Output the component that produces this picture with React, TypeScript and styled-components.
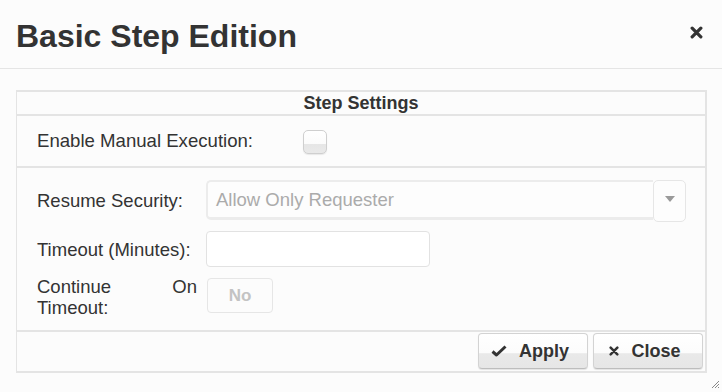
import React from 'react';
import styled, { createGlobalStyle } from 'styled-components';

const GlobalStyle = createGlobalStyle`
  html, body {
    margin: 0;
    padding: 0;
    background: #fcfcfc;
  }
  body {
    font-family: "Liberation Sans", Arial, Helvetica, sans-serif;
    color: #333;
  }
`;

const Dialog = styled.div`
  position: relative;
  width: 722px;
  height: 392px;
  background: #fcfcfc;
  overflow: hidden;
`;

const Header = styled.div`
  height: 68px;
  border-bottom: 1px solid #e5e5e5;
  display: flex;
  align-items: center;
  justify-content: space-between;
  padding: 0 19px 0 16px;
`;

const Title = styled.h1`
  margin: 0;
  padding-top: 4px;
  font-size: 32px;
  font-weight: bold;
  color: #333;
`;

const CloseIcon = styled.button`
  border: 0;
  background: none;
  padding: 0;
  margin-bottom: 4px;
  width: 13px;
  height: 13px;
  display: flex;
  cursor: pointer;
`;

const Body = styled.div`
  padding: 21px 15px 0 16px;
`;

const Panel = styled.div`
  border: 2px solid #e4e4e4;
  border-left-width: 1px;
  display: flex;
  flex-direction: column;
`;

const PanelTitle = styled.div`
  height: 22px;
  line-height: 22px;
  text-align: center;
  font-size: 18px;
  font-weight: bold;
  color: #333;
  border-bottom: 2px solid #e4e4e4;
`;

const Row = styled.div<{ $height: number }>`
  height: ${p => p.$height}px;
  border-bottom: 2px solid #e4e4e4;
  box-sizing: border-box;
  display: flex;
  align-items: center;
  padding-left: 20px;
`;

const RowLabel = styled.span`
  width: 266px;
  font-size: 18.6px;
  color: #333;
`;

const Checkbox = styled.span`
  width: 24px;
  height: 24px;
  box-sizing: border-box;
  border: 1px solid #cfcfcf;
  border-radius: 5px;
  background: linear-gradient(#ffffff 0%, #fbfbfb 58%, #e6e6e6 60%, #e9e9e9 100%);
  box-shadow: 0 1px 1px rgba(0, 0, 0, 0.08);
  margin-top: 1px;
`;

const FormArea = styled.div`
  height: 164px;
  border-bottom: 2px solid #e4e4e4;
  box-sizing: border-box;
  padding: 12px 0 0 20px;
  display: grid;
  grid-template-columns: 160px 1fr;
  column-gap: 9px;
  row-gap: 11px;
  align-content: start;
`;

const FieldLabel = styled.label<{ $justify?: boolean }>`
  font-size: 18.5px;
  line-height: 21px;
  color: #333;
  align-self: ${p => (p.$justify ? 'start' : 'center')};
  text-align: ${p => (p.$justify ? 'justify' : 'left')};
  margin-top: ${p => (p.$justify ? '-2px' : '0')};
`;

const Select = styled.div`
  display: flex;
  align-items: flex-start;
  width: 480px;
  height: 40px;
`;

const SelectField = styled.div`
  flex: 1;
  height: 40px;
  box-sizing: border-box;
  border: 2px solid #ececec;
  border-right: 0;
  border-bottom-width: 3px;
  border-radius: 5px 0 0 5px;
  background: #fdfdfd;
  display: flex;
  align-items: center;
  padding-left: 8px;
  font-size: 18.5px;
  color: #ababab;
`;

const SelectArrow = styled.div`
  flex: none;
  width: 33px;
  height: 42px;
  box-sizing: border-box;
  border: 1px solid #e6e6e6;
  border-radius: 5px;
  background: #fdfdfd;
  display: flex;
  justify-content: center;
  padding-top: 15px;
  &::after {
    content: '';
    width: 0;
    height: 0;
    border-left: 5px solid transparent;
    border-right: 5px solid transparent;
    border-top: 6px solid #9a9a9a;
  }
`;

const TextInput = styled.div`
  width: 224px;
  height: 36px;
  box-sizing: border-box;
  border: 1px solid #e2e2e2;
  border-radius: 4px;
  background: #fff;
`;

const ToggleButton = styled.div`
  width: 66px;
  height: 35px;
  box-sizing: border-box;
  margin-left: 1px;
  border: 1px solid #e6e6e6;
  border-radius: 4px;
  display: flex;
  align-items: center;
  justify-content: center;
  font-size: 17px;
  font-weight: bold;
  color: #c3c3c3;
`;

const Footer = styled.div`
  height: 38px;
  display: flex;
  justify-content: flex-end;
  align-items: flex-start;
  gap: 5px;
  padding: 1px 2px 0 0;
`;

const ActionButton = styled.button<{ $width: number }>`
  width: ${p => p.$width}px;
  height: 36px;
  box-sizing: border-box;
  border: 1px solid #d3d3d3;
  border-bottom-color: #bdbdbd;
  border-radius: 4px;
  background: linear-gradient(#ffffff 0%, #fcfcfc 55%, #e9e9e9 58%, #e6e6e6 100%);
  box-shadow: 0 1px 1px rgba(0, 0, 0, 0.1);
  display: flex;
  align-items: center;
  justify-content: center;
  gap: 12px;
  font-family: inherit;
  font-size: 18px;
  font-weight: bold;
  color: #333;
  padding: 0 6px 0 0;
  cursor: pointer;
`;

const Grip = styled.svg`
  position: absolute;
  right: 2px;
  bottom: 3px;
`;

const CheckMark = () => (
  <svg width="16" height="12" viewBox="0 0 16 12">
    <path d="M1.5 6.5 L5.5 10 L14.5 1.5" fill="none" stroke="#333" strokeWidth="3" strokeLinejoin="round" />
  </svg>
);

const Times = ({ size }: { size: number }) => (
  <svg width={size} height={size} viewBox="0 0 12 12">
    <path d="M2 2 L10 10 M10 2 L2 10" stroke="#333" strokeWidth="3" strokeLinecap="round" />
  </svg>
);

const App: React.FC = () => (
  <>
    <GlobalStyle />
    <Dialog>
      <Header>
        <Title>Basic Step Edition</Title>
        <CloseIcon aria-label="close">
          <Times size={13} />
        </CloseIcon>
      </Header>
      <Body>
        <Panel>
          <PanelTitle>Step Settings</PanelTitle>
          <Row $height={52}>
            <RowLabel>Enable Manual Execution:</RowLabel>
            <Checkbox />
          </Row>
          <FormArea>
            <FieldLabel>Resume Security:</FieldLabel>
            <Select>
              <SelectField>Allow Only Requester</SelectField>
              <SelectArrow />
            </Select>
            <FieldLabel>Timeout (Minutes):</FieldLabel>
            <TextInput />
            <FieldLabel $justify>Continue On Timeout:</FieldLabel>
            <ToggleButton>No</ToggleButton>
          </FormArea>
          <Footer>
            <ActionButton $width={110}>
              <CheckMark />
              Apply
            </ActionButton>
            <ActionButton $width={110}>
              <Times size={10} />
              Close
            </ActionButton>
          </Footer>
        </Panel>
      </Body>
      <Grip width="9" height="9" viewBox="0 0 9 9">
        <path d="M8 1 L1 8 M8 4 L4 8 M8 7 L7 8" stroke="#888" strokeWidth="1" />
      </Grip>
    </Dialog>
  </>
);

export default App;
